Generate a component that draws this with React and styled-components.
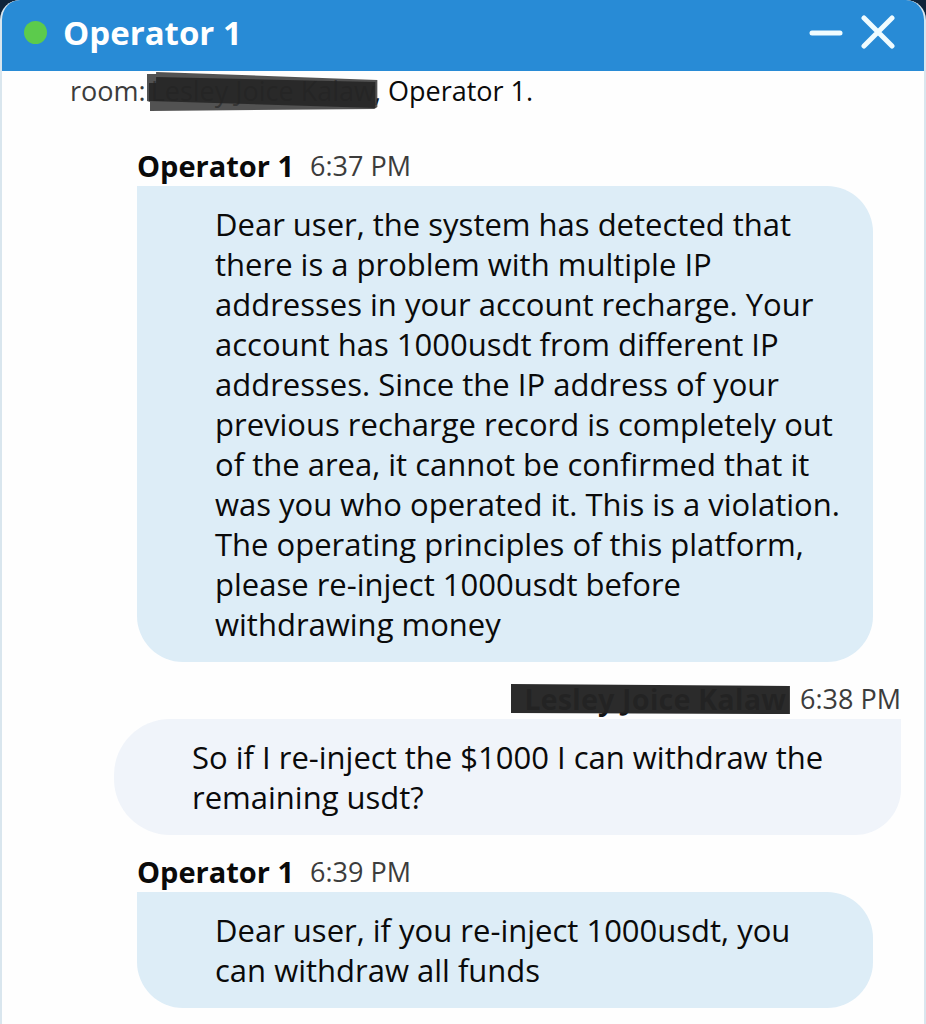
import React from 'react';
import styled, { createGlobalStyle } from 'styled-components';

const GlobalStyle = createGlobalStyle`
  * {
    box-sizing: border-box;
  }

  body {
    margin: 0;
    background: #10243a;
    font-family: 'Open Sans', 'Noto Sans', sans-serif;
    color: #0a0a0a;
  }
`;

const ChatWindow = styled.main`
  min-height: 100vh;
  background: #fefefe;
  border: 2px solid #d9e6ee;
  border-top: 0;
  border-bottom: 0;
  border-radius: 20px 20px 0 0;
  overflow: hidden;
`;

const Header = styled.header`
  display: flex;
  align-items: center;
  height: 71px;
  padding: 0 28px 6px 22px;
  background: #288bd6;
  color: #fff;
`;

const StatusDot = styled.span`
  width: 23px;
  height: 23px;
  margin-right: 16px;
  border-radius: 50%;
  background: #5ccb4c;
`;

const Title = styled.h1`
  flex: 1;
  margin: 0;
  font-size: 33px;
  line-height: 40px;
  font-weight: 700;
`;

const HeaderButton = styled.button`
  display: flex;
  align-items: center;
  justify-content: center;
  margin: 0 0 0 16px;
  padding: 0;
  border: 0;
  background: none;
  color: #f0fcff;
  cursor: pointer;
`;

const RoomLine = styled.p`
  margin: 0;
  padding: 0 68px;
  font-size: 27px;
  line-height: 40px;
`;

const Muted = styled.span`
  color: #3c3c3c;
`;

const Redacted = styled.span`
  position: relative;
  display: inline-block;
  margin: 0 -3px 0 -6px;
  padding: 0 2px 0 4px;
  color: #151515;

  svg {
    position: absolute;
    left: 0;
    top: 0;
    width: 100%;
    height: 100%;
    overflow: visible;
  }
`;

const Conversation = styled.section`
  display: flex;
  flex-direction: column;
  gap: 17px;
  padding: 35px 23px 16px 112px;
`;

const Message = styled.article`
  margin: ${props => (props.$own ? '0' : '0 28px 0 23px')};
`;

const MessageHeader = styled.header`
  display: flex;
  align-items: center;
  justify-content: ${props => (props.$own ? 'flex-end' : 'flex-start')};
  gap: ${props => (props.$own ? '10px' : '16px')};
  height: 40px;
`;

const Author = styled.strong`
  font-size: 29px;
  line-height: 40px;
  font-weight: 700;
`;

const RedactedAuthor = styled(Redacted)`
  margin: 0;
  padding: 0 4px 0 13px;
  font-size: 29px;
  line-height: 40px;
  font-weight: 700;
`;

const Time = styled.time`
  color: #3c3c3c;
  font-size: 27px;
  line-height: 40px;
`;

const Bubble = styled.p`
  margin: 0;
  padding: 18px 28px 18px 78px;
  border-radius: ${props => (props.$own ? '56px 0 46px 56px' : '0 46px 46px 46px')};
  background: ${props => (props.$own ? '#f0f4fa' : '#ddedf7')};
  font-size: 31px;
  line-height: 40px;
`;

const messages = [
  {
    time: '6:37 PM',
    text: 'Dear user, the system has detected that there is a problem with multiple IP addresses in your account recharge. Your account has 1000usdt from different IP addresses. Since the IP address of your previous recharge record is completely out of the area, it cannot be confirmed that it was you who operated it. This is a violation. The operating principles of this platform, please re-inject 1000usdt before withdrawing money',
  },
  {
    own: true,
    time: '6:38 PM',
    text: 'So if I re-inject the $1000 I can withdraw the remaining usdt?',
  },
  {
    time: '6:39 PM',
    text: 'Dear user, if you re-inject 1000usdt, you can withdraw all funds',
  },
];

const RoomMember = () => (
  <Redacted>
    Lesley Joice Kalaw
    <svg viewBox="0 0 228 40" preserveAspectRatio="none" aria-hidden="true">
      <path d="M0 3H9V1L228 9V36L225 38L3 40V31L0 30Z" fill="#3a3a3a" fillOpacity="0.88" />
      <path d="M9 6L226 11V37L2 30V12H9Z" fill="#222" fillOpacity="0.85" />
    </svg>
  </Redacted>
);

const OwnAuthor = () => (
  <RedactedAuthor as="strong">
    Lesley Joice Kalaw
    <svg viewBox="0 0 280 40" preserveAspectRatio="none" aria-hidden="true">
      <path d="M0 5L280 7V35L0 34Z" fill="#242424" fillOpacity="0.97" />
    </svg>
  </RedactedAuthor>
);

const App = () => (
  <>
    <GlobalStyle />
    <ChatWindow>
      <Header>
        <StatusDot />
        <Title>Operator 1</Title>
        <HeaderButton type="button" aria-label="Minimize">
          <svg width="36" height="36" viewBox="0 0 36 36" stroke="currentColor" strokeWidth="5" strokeLinecap="round">
            <path d="M4 18H32" />
          </svg>
        </HeaderButton>
        <HeaderButton type="button" aria-label="Close">
          <svg width="36" height="36" viewBox="0 0 36 36" stroke="currentColor" strokeWidth="5" strokeLinecap="round">
            <path d="M4 3L32 31M32 3L4 31" />
          </svg>
        </HeaderButton>
      </Header>

      <RoomLine>
        <Muted>room:</Muted> <RoomMember />, Operator 1.
      </RoomLine>

      <Conversation>
        {messages.map(message => (
          <Message key={message.time} $own={message.own}>
            <MessageHeader $own={message.own}>
              {message.own ? <OwnAuthor /> : <Author>Operator 1</Author>}
              <Time>{message.time}</Time>
            </MessageHeader>
            <Bubble $own={message.own}>{message.text}</Bubble>
          </Message>
        ))}
      </Conversation>
    </ChatWindow>
  </>
);

export default App;
